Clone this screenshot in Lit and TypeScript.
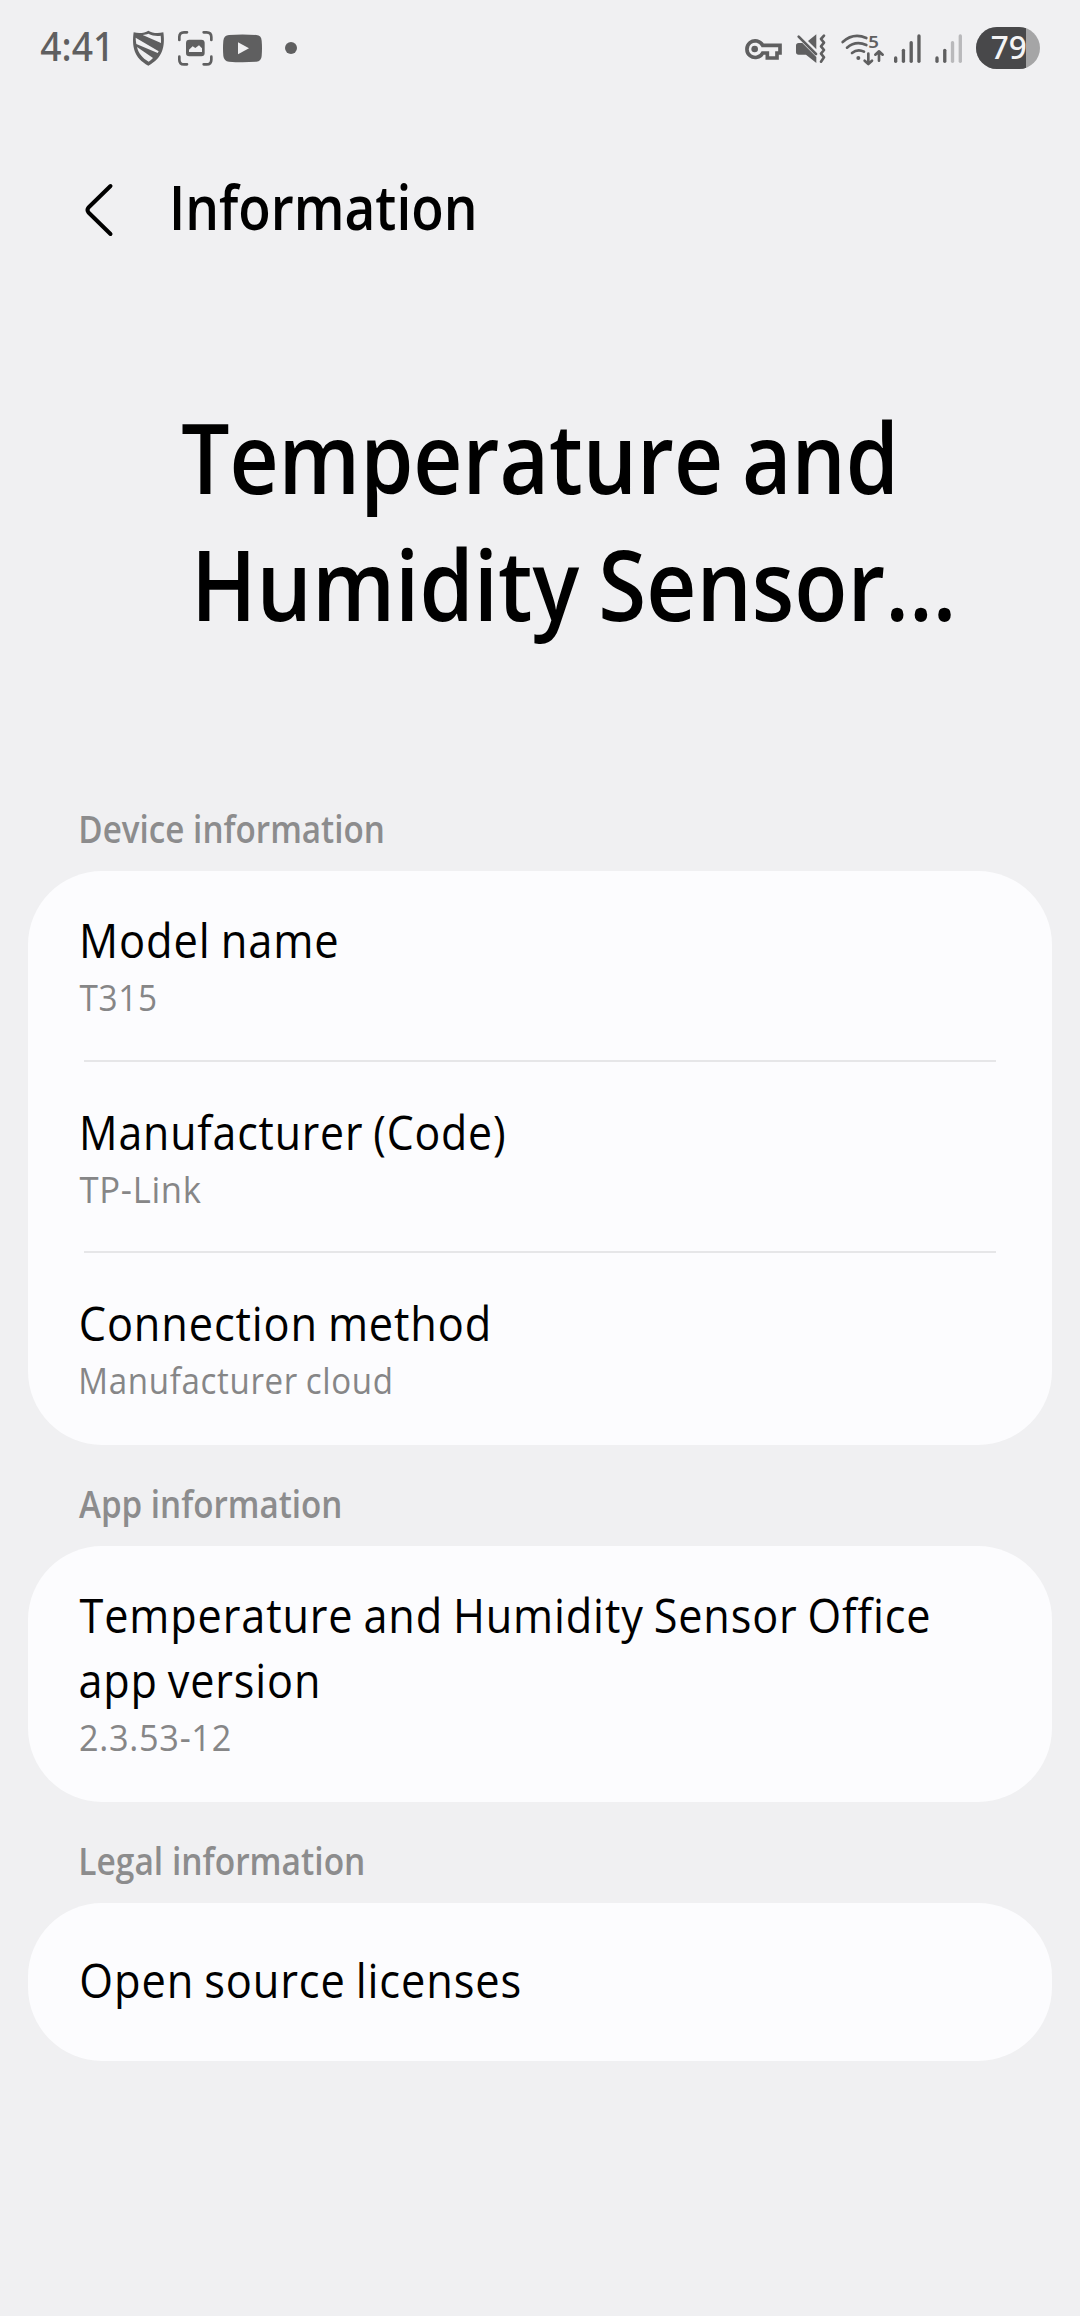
import { LitElement, html, svg, css } from "lit";
import { customElement, property } from "lit/decorators.js";

interface Line {
  text: string;
  /** Ink start, measured from the left edge of the containing block. */
  start: number;
  /** Ink width of the line. */
  width: number;
}

interface Row {
  title: Line[];
  value?: Line;
}

interface Section {
  label: Line;
  rows: Row[];
}

const SECTIONS: Section[] = [
  {
    label: { text: "Device information", start: 81, width: 301.5 },
    rows: [
      {
        title: [{ text: "Model name", start: 54.7, width: 254.5 }],
        value: { text: "T315", start: 51.5, width: 75.8 },
      },
      {
        title: [{ text: "Manufacturer (Code)", start: 54.7, width: 422 }],
        value: { text: "TP-Link", start: 51.5, width: 121.3 },
      },
      {
        title: [{ text: "Connection method", start: 52.6, width: 406.9 }],
        value: { text: "Manufacturer cloud", start: 53, width: 309.8 },
      },
    ],
  },
  {
    label: { text: "App information", start: 79, width: 261 },
    rows: [
      {
        title: [
          { text: "Temperature and Humidity Sensor Office", start: 51.5, width: 849.5 },
          { text: "app version", start: 52.2, width: 237.4 },
        ],
        value: { text: "2.3.53-12", start: 52, width: 149.5 },
      },
    ],
  },
  {
    label: { text: "Legal information", start: 81, width: 282 },
    rows: [{ title: [{ text: "Open source licenses", start: 53.2, width: 438.5 }] }],
  },
];

/** A single line of text whose glyphs are condensed to a given ink width. */
@customElement("fit-line")
export class FitLine extends LitElement {
  @property() text = "";
  @property({ type: Number }) start = 0;
  @property({ type: Number }) width = 0;

  static styles = css`
    :host {
      display: block;
      white-space: pre;
    }
    .line {
      display: inline-block;
      transform-origin: 0 50%;
      vertical-align: top;
    }
  `;

  protected updated() {
    const line = this.renderRoot.querySelector(".line") as HTMLElement;
    const style = getComputedStyle(line);
    const ctx = document.createElement("canvas").getContext("2d")!;
    ctx.font = `${style.fontWeight} ${style.fontSize} ${style.fontFamily}`;
    const m = ctx.measureText(this.text);
    const spacing = parseFloat(style.letterSpacing) || 0;
    const wordSpacing = parseFloat(style.wordSpacing) || 0;
    const ink =
      m.actualBoundingBoxLeft +
      m.actualBoundingBoxRight +
      spacing * (this.text.length - 1) +
      wordSpacing * (this.text.split(" ").length - 1);
    const scale = this.width / ink;
    const shift = this.start + m.actualBoundingBoxLeft * scale;
    line.style.transform = `translateX(${shift}px) scaleX(${scale})`;
  }

  render() {
    return html`<span class="line">${this.text}</span>`;
  }
}

const fit = (l: Line, cls = "") =>
  html`<fit-line class=${cls} .text=${l.text} .start=${l.start} .width=${l.width}></fit-line>`;

@customElement("status-bar")
export class StatusBar extends LitElement {
  static styles = css`
    :host {
      display: flex;
      justify-content: space-between;
      box-sizing: border-box;
      height: 96px;
      padding: 15px 30px 0;
      color: #5f5f60;
    }
    .group {
      display: flex;
    }
    svg {
      display: block;
      height: 70px;
    }
    text {
      font-family: "Noto Sans", "Open Sans", sans-serif;
    }
    .solid {
      fill: currentColor;
    }
    .stroke {
      fill: none;
      stroke: currentColor;
      stroke-width: 8;
      stroke-linecap: round;
      stroke-linejoin: round;
    }
    .clock {
      fill: currentColor;
      font-size: 119px;
      font-weight: 500;
    }
    .band {
      fill: currentColor;
      font-size: 50px;
      font-weight: 600;
    }
    .level {
      fill: #f4f4f5;
      font-size: 96px;
      font-weight: 500;
    }
    .faint {
      opacity: 0.38;
    }
  `;

  /** Icons share one coordinate space per side, three units to a pixel. */
  private tile(x: number, w: number, body: unknown) {
    return html`<svg viewBox="${x} 0 ${w} 210" width=${w / 3}>${body}</svg>`;
  }

  private bars(x: number, lit: number) {
    const tops = [124, 101, 78, 58];
    return tops.map(
      (top, i) => svg`<rect class=${i < lit ? "solid" : "solid faint"} x=${x + i * 23.3} y=${top}
        width="10" height=${144 - top} rx="5"/>`
    );
  }

  render() {
    return html`
      <div class="group">
        ${this.tile(0, 300, svg`<text class="clock" x="31" y="137" textLength="222" lengthAdjust="spacingAndGlyphs">4:41</text>`)}
        ${this.tile(300, 120, svg`
          <path class="solid" fill-rule="evenodd" d="M355 47C344 54 328 56 311 52C305 94 312 130 355 152C398 130 406 94 400 52C383 56 366 54 355 47Z
            M338 60C345 59 350 58 355 56C367 62 380 64 392 62C393 69 393 75 393 84Z
            M317 68L386 109L383 114L319 87C318 81 317 74 317 68Z
            M321 96L369 129C365 133 361 137 356 140C338 130 326 116 321 96Z"/>`)}
        ${this.tile(420, 150, svg`
          <path class="stroke" d="M448 75V66Q448 52 462 52H471M521 52H530Q544 52 544 66V75M544 125V134Q544 148 530 148H521M471 148H462Q448 148 448 134V125"/>
          <rect class="solid" x="468" y="74" width="56" height="50" rx="10"/>
          <path fill="#f0f0f2" d="M477 111V104L488 94L496 99L507 91L516 100V111Z"/>`)}
        ${this.tile(570, 150, svg`
          <path class="solid" d="M597 60Q637 57 679 60Q694 61 695 77Q697 100 695 123Q694 139 679 140Q637 143 597 140Q582 139 580 123Q578 100 580 77Q582 61 597 60Z"/>
          <path fill="#f0f0f2" d="M624 82L657 100L624 118Z"/>`)}
        ${this.tile(720, 120, svg`<circle class="solid" cx="783" cy="99" r="18"/>`)}
      </div>
      <div class="group">
        ${this.tile(0, 180, svg`
          <path fill="none" stroke="currentColor" stroke-width="11" d="M98 91H150V114H141V129H112V114H98A25 25 0 1 1 98 91Z"/>
          <circle class="solid" cx="74" cy="102" r="10"/>`)}
        ${this.tile(180, 130, svg`
          <path class="solid" d="M198 92Q198 84 206 84H217L259 126V144L228 119H206Q198 119 198 111Z"/>
          <path class="solid" d="M259 58V103L234 78Z"/>
          <path class="stroke" d="M206 65L258 117"/>
          <path class="stroke" d="M282 62L273 72L282 83L273 94L282 105L273 116L282 127L273 140"/>`)}
        ${this.tile(310, 170, svg`
          <path class="stroke" d="M339 81Q371 52 410 69M352 98Q378 76 410 90M367 114Q384 100 403 110"/>
          <circle class="solid" cx="386" cy="129" r="6"/>
          <path class="stroke" d="M416 116V146M405 137L416 147L427 137M448 137V110M437 119L448 109L459 119"/>
          <text class="band" x="416" y="98" textLength="32" lengthAdjust="spacingAndGlyphs">5</text>`)}
        ${this.tile(480, 120, this.bars(492, 4))}
        ${this.tile(600, 120, this.bars(616, 2))}
        ${this.tile(720, 240, svg`
          <clipPath id="pill"><rect x="738" y="36" width="192" height="126" rx="63"/></clipPath>
          <g clip-path="url(#pill)">
            <rect x="738" y="36" width="192" height="126" fill="#a5a5a6"/>
            <rect x="738" y="36" width="150" height="126" fill="#48484a"/>
          </g>
          <text class="level" x="782" y="132" textLength="108" lengthAdjust="spacingAndGlyphs">79</text>`)}
      </div>
    `;
  }
}

@customElement("app-root")
export class AppRoot extends LitElement {
  static styles = css`
    :host {
      display: block;
      box-sizing: border-box;
      width: 1080px;
      height: 2316px;
      overflow: hidden;
      background: #f0f0f2;
      color: #000;
      font-family: "Open Sans", "Noto Sans", sans-serif;
    }
    .header {
      display: flex;
      align-items: center;
      height: 80px;
      margin-top: 70px;
      padding-left: 80px;
      font-size: 61.5px;
      line-height: 80px;
      font-weight: 600;
    }
    .back {
      display: block;
      width: 40px;
      height: 80px;
    }
    .title {
      margin: 147px 0 0;
      font-size: 98px;
      line-height: 127px;
      font-weight: 600;
      word-spacing: -0.04em;
    }
    .sections {
      display: flex;
      flex-direction: column;
      gap: 34px;
      margin-top: 157px;
    }
    .label {
      font-size: 37.3px;
      line-height: 50px;
      font-weight: 600;
      color: #8c8c8d;
    }
    .card {
      margin: 17px 28px 0;
      border-radius: 74px;
      background: #fcfcfe;
    }
    .row {
      padding: 36px 0 40px;
    }
    .row.single {
      padding: 44px 0 49px;
    }
    .row.divided {
      padding-bottom: 37.5px;
    }
    .divider {
      height: 2px;
      margin: 0 56px 1px;
      background: #e6e6e8;
    }
    .name {
      font-size: 47.5px;
      line-height: 65px;
      letter-spacing: 0.02em;
      word-spacing: -0.05em;
    }
    .value {
      font-size: 36.5px;
      line-height: 50px;
      letter-spacing: 0.02em;
      word-spacing: -0.05em;
      color: #868687;
    }
  `;

  private row(row: Row, i: number, rows: Row[]) {
    const last = i === rows.length - 1;
    const kind = !row.value ? "single" : last ? "last" : "divided";
    return html`
      <div class="row ${kind}">
        ${row.title.map((l) => fit(l, "name"))} ${row.value ? fit(row.value, "value") : ""}
      </div>
      ${last ? "" : html`<div class="divider"></div>`}
    `;
  }

  render() {
    return html`
      <status-bar></status-bar>
      <div class="header">
        <svg class="back" viewBox="0 0 40 80">
          <path d="M30.5 20L8.5 41.5Q6.5 44 8.5 46.5L30.5 68" fill="none" stroke="#000"
            stroke-width="4" stroke-linecap="round" stroke-linejoin="round"></path>
        </svg>
        ${fit({ text: "Information", start: 53.3, width: 300.7 })}
      </div>
      <div class="title">
        ${fit({ text: "Temperature and", start: 182, width: 710 })}
        ${fit({ text: "Humidity Sensor…", start: 199, width: 752 })}
      </div>
      <div class="sections">
        ${SECTIONS.map(
          (s) => html`
            <div class="section">
              ${fit(s.label, "label")}
              <div class="card">${s.rows.map((r, i) => this.row(r, i, s.rows))}</div>
            </div>
          `
        )}
      </div>
    `;
  }
}
